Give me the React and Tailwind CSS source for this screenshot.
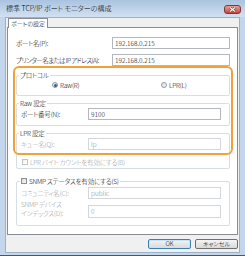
const FONT = "font-['Noto_Sans_CJK_JP','Noto_Sans',sans-serif] [font-feature-settings:'palt']";
const LABEL = "text-[6.5px] leading-[8px] tracking-[-0.2px]";

function TextBox({ value, disabled, className = "" }) {
  return (
    <div
      className={`flex items-center h-[12px] pl-[2px] bg-white border ${
        disabled ? "border-[#d3d7dc] text-[#8e8e8e]" : "border-[#b3b8bf] text-black"
      } ${className}`}
    >
      <span className="text-[6.5px] leading-[8px]">{value}</span>
    </div>
  );
}

function GroupBox({ legend, className = "", children }) {
  return (
    <fieldset className={`border border-[#d5dfe5] rounded-[2px] ${className}`}>
      <legend className={`ml-[2px] px-[1px] h-[8px] text-black ${LABEL}`}>{legend}</legend>
      {children}
    </fieldset>
  );
}

function Radio({ checked }) {
  return (
    <span className="w-[6px] h-[6px] rounded-full border border-[#8e98a4] bg-linear-to-br from-[#dcdcdc] to-[#fafafa] flex items-center justify-center">
      {checked && <span className="w-[3px] h-[3px] rounded-full bg-[#2f5f96]" />}
    </span>
  );
}

function CheckBox({ disabled }) {
  return (
    <span
      className={`w-[6px] h-[6px] border bg-linear-to-br ${
        disabled ? "border-[#c4c4c4] from-[#f0f0f0] to-white" : "border-[#8e8f8f] from-[#dcdcdc] to-[#f6f6f6]"
      }`}
    />
  );
}

function Button({ label, primary }) {
  return (
    <button
      className={`w-[43px] h-[10px] rounded-[2px] border flex items-center justify-center text-[6px] leading-[8px] text-black bg-linear-to-b from-[#f4f4f4] to-[#d9d9d9] ${
        primary ? "border-[#3c7fb1] shadow-[inset_0_0_0_1px_#c6e4f7]" : "border-[#707070]"
      }`}
    >
      {label}
    </button>
  );
}

export default function App() {
  return (
    <div className={`w-[245px] h-[256px] flex flex-col bg-[#c4d6eb] border-b border-[#33606e] font-light ${FONT}`}>
      {/* title bar */}
      <div className="h-[17px] flex items-start justify-between bg-linear-to-b from-[#a9c3df] to-[#d2e1f1]">
        <span className="mt-[4px] ml-[6px] text-[7px] leading-[8px] text-black">標準 TCP/IP ポート モニターの構成</span>
        <div className="mt-[5px] mr-[4px] w-[17px] h-[9px] rounded-[3px] border border-[#7d3a32] bg-linear-to-b from-[#e6a093] to-[#c5453a] flex items-center justify-center">
          <svg width="7" height="5" viewBox="0 0 7 5">
            <path d="M1 0.5 L6 4.5 M6 0.5 L1 4.5" stroke="#5a2520" strokeWidth="2.2" />
            <path d="M1 0.5 L6 4.5 M6 0.5 L1 4.5" stroke="#ffffff" strokeWidth="1.2" />
          </svg>
        </div>
      </div>

      {/* client area */}
      <div className="mx-[5px] h-[236px] flex flex-col bg-[#f0f0f0] border border-[#9db1c6]">
        <div className="ml-[2px] w-[40px] h-[10px] -mb-[1px] relative z-10 bg-white border border-b-0 border-[#898c95] flex items-center justify-center text-[6px] leading-[8px] text-black">
          ポートの設定
        </div>

        <div className="relative mx-[1px] h-[208px] bg-white border border-[#898c95] pt-[9px] pl-[8px] pr-[7px] flex flex-col text-black">
          <div className="flex items-center justify-between">
            <span className={LABEL}>ポート名(P):</span>
            <TextBox value="192.168.0.215" className="w-[118px]" />
          </div>
          <div className="mt-[5px] flex items-center justify-between">
            <span className="text-[6.5px] leading-[8px] tracking-[-0.6px] whitespace-nowrap">プリンター名または IP アドレス(A):</span>
            <TextBox value="192.168.0.215" className="w-[118px]" />
          </div>

          <GroupBox legend="プロトコル" className="mt-[5px]">
            <div className="pt-[2px] pb-[6px] pl-[35px] flex items-center h-[16px]">
              <div className="w-[109px] flex items-center gap-[2px]">
                <Radio checked />
                <span className={LABEL}>Raw(R)</span>
              </div>
              <div className="flex items-center gap-[2px]">
                <Radio />
                <span className={LABEL}>LPR(L)</span>
              </div>
            </div>
          </GroupBox>

          <GroupBox legend="Raw 設定" className="mt-[3px]">
            <div className="pt-[1px] pb-[5px] pl-[4px] pr-[8px] flex items-center justify-between">
              <span className={LABEL}>ポート番号(N):</span>
              <TextBox value="9100" className="w-[133px]" />
            </div>
          </GroupBox>

          <GroupBox legend="LPR 設定" className="mt-[3px]">
            <div className="pt-[1px] pb-[2px] pl-[4px] pr-[8px] flex flex-col">
              <div className="flex items-center justify-between">
                <span className={`${LABEL} text-[#9a9a9a]`}>キュー名(Q):</span>
                <TextBox value="lp" disabled className="w-[133px]" />
              </div>
              <div className="mt-[8px] h-[8px] flex items-center gap-[2px] pl-[1px]">
                <CheckBox disabled />
                <span className={`${LABEL} text-[#9a9a9a]`}>LPR バイト カウントを有効にする(B)</span>
              </div>
            </div>
          </GroupBox>

          <fieldset className="mt-[8px] border border-[#d5dfe5] rounded-[2px]">
            <legend className="ml-[3px] px-[1px] h-[8px]">
              <span className="flex items-center gap-[2px] h-[8px]">
                <CheckBox />
                <span className={`${LABEL} text-black`}>SNMP ステータスを有効にする(S)</span>
              </span>
            </legend>
            <div className="pt-[2px] pb-[7px] pl-[4px] pr-[8px] flex flex-col text-[#9a9a9a]">
              <div className="flex items-center justify-between">
                <span className={LABEL}>コミュニティ名(C):</span>
                <TextBox value="public" disabled className="w-[133px]" />
              </div>
              <div className="mt-[2px] h-[17px] flex items-start justify-between">
                <span className="-mt-[1px] text-[6.5px] leading-[9px] tracking-[-0.2px]">
                  SNMP デバイス
                  <br />
                  インデックス(D):
                </span>
                <div className="mt-[4px] w-[133px] h-[13px] pl-[2px] pt-[1px] bg-white border border-[#d3d7dc] text-[#8e8e8e]">
                  <span className="block text-[6.5px] leading-[8px]">0</span>
                </div>
              </div>
            </div>
          </fieldset>

          {/* highlight overlay */}
          <div className="absolute left-[5px] top-[38px] w-[220px] h-[89px] rounded-[6px] border-2 border-[#f2a03a] pointer-events-none" />
        </div>

        <div className="mt-[4px] mr-[1px] flex justify-end gap-[4px]">
          <Button label="OK" primary />
          <Button label="キャンセル" />
        </div>
      </div>
    </div>
  );
}
